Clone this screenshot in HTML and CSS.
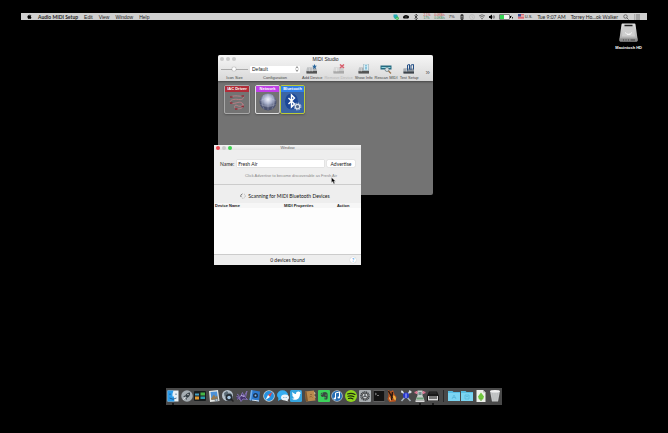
FILE: index.html
```html
<!DOCTYPE html>
<html lang="en">
<head>
<meta charset="utf-8">
<title>Audio MIDI Setup</title>
<link rel="stylesheet" href="styles.css">
</head>
<body>
<div class="screen">
  <header class="menubar">
    <nav class="menus">
      <svg class="apple" viewBox="0 0 12 14"><path d="M8.300 0C8 2 7 3 5.800 3.200 5.800 1.600 7 .3 8.300 0ZM6 4C7 3.900 7.600 3.300 8.700 3.300 9.800 3.300 10.700 3.900 11.300 4.700 8.900 6.200 9.400 9.100 11.700 10 10.900 12 9.600 13.900 8.400 13.900 7.500 13.900 7.100 13.400 6.100 13.400 5.100 13.400 4.600 13.900 3.800 13.900 2.200 13.900.2 10.700.2 8 .2 5 2 3.400 3.700 3.400 4.700 3.400 5.400 4 6 4Z"/></svg>
      <a class="app-name" href="#">Audio MIDI Setup</a>
      <a href="#">Edit</a>
      <a href="#">View</a>
      <a href="#">Window</a>
      <a href="#">Help</a>
    </nav>
    <div class="status">
      <div class="extras">
        <svg class="glyph" viewBox="0 0 12 12"><path d="M1 1h7l2 4-3 5H4L1 6Z" fill="#25a9b8"/><circle cx="8.500" cy="8.500" r="3.300" fill="#3dbb57"/><path d="M7 8.500l1 1 2-2" stroke="#fff" fill="none"/></svg>
        <svg class="glyph" viewBox="0 0 12 12"><path d="M0 6c1-3 3-3 3-3 2-2 5-1 6 0 3 0 3 3 3 3 0 3-2 3-3 3H3C1 9 0 8 0 6Z"/><path d="M3.500 6h5" stroke="#999"/></svg>
        <svg class="glyph" viewBox="0 0 12 12"><path d="M3 3l6 6-3 3V0l3 3-6 6" fill="none" stroke="#222" stroke-width="1.300"/></svg>
        <span class="meter"><span class="meter-up">2.1%</span><span class="meter-down">17%</span></span>
        <span class="meter"><span class="meter-up">0.0KB/s</span><span class="meter-down">0.0KB/s</span></span>
        <span class="percent">7%</span>
        <svg class="glyph" viewBox="0 0 12 12"><rect x="3" y="0" width="6" height="12" rx="3" fill="#333"/><path d="M4 5h4M4 8h4" stroke="#bbb"/></svg>
        <svg class="glyph" viewBox="0 0 12 12"><circle cx="6" cy="6" r="5" fill="none" stroke="#aaa"/><path d="M6 3v3l2 2" fill="none" stroke="#aaa"/></svg>
        <svg class="glyph" viewBox="0 0 12 12"><path d="M0 4q6-5 12 0M2 6.500q4-3 8 0" fill="none" stroke="#444" stroke-width="1.300"/><path d="M4 9q2-1.500 4 0L6 11Z" fill="#333"/></svg>
        <svg class="glyph" viewBox="0 0 12 12"><path d="M0 4h2l4-3v10L2 8H0Z"/><path d="M7.500 4q1.500 2 0 4M9.500 2.500q2.500 3.500 0 7" fill="none" stroke="#222" stroke-width="1.200"/></svg>
        <svg class="battery" viewBox="0 0 28 12"><rect x="1" y="1" width="20" height="10" rx="1" fill="#f4f4f4" stroke="#444" stroke-width="1.300"/><rect x="2" y="2" width="8" height="8" fill="#36d453"/><path d="M22 4h2v4h-2ZM26 2l-1 4h3l-2 5"/></svg>
      </div>
      <span class="locale"><svg class="flag" viewBox="0 0 12 10"><path fill="#e9dada" d="M0 0h12v10H0z"/><path d="M0 1h12M0 4h12M0 7h12M0 9.500h12" stroke="#d33b46" stroke-width="1.400"/><path fill="#3c4f94" d="M0 0h6v5H0z"/></svg>U.S.</span>
      <time class="clock">Tue 9:07 AM</time>
      <span class="user">Torrey Ho…ok Walker</span>
      <svg class="glyph" viewBox="0 0 12 12"><circle cx="5" cy="5" r="3.500" fill="none" stroke="#444" stroke-width="1.300"/><path d="M7.500 7.500L11 11" stroke="#444" stroke-width="1.500"/></svg>
      <svg class="glyph" viewBox="0 0 12 12"><path d="M0 2h1.500M0 6h1.500M0 10h1.500M3.500 2H12M3.500 6H12M3.500 10H12" stroke="#444" stroke-width="1.300"/></svg>
    </div>
  </header>

  <figure class="disk">
    <svg viewBox="0 0 38 38"><defs><linearGradient id="metal" x2="0" y2="1"><stop stop-color="#e4e4e4"/><stop offset="1" stop-color="#a2a2a2"/></linearGradient></defs><path d="M5 3Q5 1 7 1H31Q33 1 33 3L37 31V35Q37 37 35 37H3Q1 37 1 35V31Z" fill="url(#metal)"/><path d="M1 31H37V35Q37 37 35 37H3Q1 37 1 35Z" fill="#8b8b8b"/><path d="M9 4H29L32 27H6Z" fill="#cecece"/><path d="M11 5h16" stroke="#222" stroke-width="3"/><path d="M12 19q7 7 14 0M16 23h7" stroke="#f5f5f5" stroke-width="2" fill="none"/><path d="M8 34h2M13 34h2M18 34h2M23 34h9" stroke="#444" stroke-width="2"/></svg>
    <figcaption>Macintosh HD</figcaption>
  </figure>

  <section class="window studio">
    <header class="studio-head">
      <div class="titlebar">
        <span class="lights"><i></i><i></i><i></i></span>
        <h1>MIDI Studio</h1>
      </div>
      <div class="toolbar">
        <div class="tool tool-size"><span class="tool-body"><input id="size" class="slider" type="range" value="48"></span><label for="size">Icon Size</label></div>
        <div class="tool tool-config"><span class="tool-body"><select id="config" class="picker"><option>Default</option></select><svg class="chevrons" viewBox="0 0 6 10"><path d="M1 4l2-3 2 3M1 6l2 3 2-3" fill="none" stroke="#444"/></svg></span><label for="config">Configuration</label></div>
        <button class="tool" type="button"><span class="tool-body"><svg viewBox="0 0 24 20"><path d="M2 7h18l2 7v5H1v-5Z" fill="#aeb2b5"/><path d="M1 14h21v5H1Z" fill="#555"/><path d="M4 8v7M7 8v7M10 8v7M13 8v7" stroke="#eee"/><path d="M17 0l1.500 3.500H22L19 6l1 4-3-2-3 2 1-4-3-2.500h3.500Z" fill="#24639b"/></svg></span>Add Device</button>
        <button class="tool" type="button" disabled><span class="tool-body"><svg viewBox="0 0 24 20"><path d="M2 7h18l2 7v5H1v-5Z" fill="#ccc"/><path d="M1 14h21v5H1Z" fill="#aaa"/><path d="M4 8v7M7 8v7M10 8v7" stroke="#fff"/><path d="M14 1l8 7M22 1l-8 7" stroke="#d8606e" stroke-width="3"/></svg></span>Remove Device</button>
        <button class="tool" type="button"><span class="tool-body"><svg viewBox="0 0 24 20"><path d="M2 7h18l2 7v5H1v-5Z" fill="#aeb2b5"/><path d="M1 14h21v5H1Z" fill="#555"/><path d="M4 8v7M7 8v7" stroke="#eee"/><path d="M11 0h10v13h-10Z" fill="#d9eef5" stroke="#8fa7b0"/><path d="M16 2v2M16 5v6" stroke="#3b9bc4" stroke-width="2"/></svg></span>Show Info</button>
        <button class="tool" type="button"><span class="tool-body"><svg viewBox="0 0 24 20"><path d="M1 3h22v8H1Z" fill="#246a80"/><path d="M3 7h18" stroke="#8fd4de" stroke-width="2"/><circle cx="14" cy="11" r="4" fill="#d7e1e5" stroke="#6a7c84" stroke-width="1.500"/><path d="M17 14l5 5" stroke="#9a7550" stroke-width="2.500"/></svg></span>Rescan MIDI</button>
        <button class="tool" type="button"><span class="tool-body"><svg viewBox="0 0 24 20"><path d="M1 9h21v10H1Z" fill="#8e969e"/><path d="M1 15h21v4H1Z" fill="#3e444b"/><path d="M9 13V2l4-1v10M16 12V2l5-1v10" fill="none" stroke="#234f86" stroke-width="2"/><path d="M4 10v5M7 10v5" stroke="#eee"/></svg></span>Test Setup</button>
        <button class="more" type="button" aria-label="More">»</button>
      </div>
    </header>
    <div class="devices">
      <article class="device iac">
        <h2>IAC Driver</h2>
        <svg viewBox="0 0 40 40"><path d="M7 10c10-5 20 0 24-2s4 9-8 7-20 3-15 7 16-5 22 0-4 9-10 5-7 8 0 7 14-1 12-10" fill="none" stroke="#c08088" stroke-width="1.800"/><path d="M6 10h5M29 8h5M6 22h5M29 29h5M16 34h5" stroke="#8c2f3a" stroke-width="3"/></svg>
      </article>
      <article class="device network">
        <h2>Network</h2>
        <svg viewBox="0 0 40 40"><defs><radialGradient id="orb" cx=".5" cy=".35"><stop stop-color="#f3f6ff"/><stop offset=".55" stop-color="#a2aac5"/><stop offset="1" stop-color="#4b526f"/></radialGradient></defs><circle cx="20" cy="20" r="17" fill="url(#orb)"/><path d="M5 17q15-8 30 0M5 25q15 7 30 0M20 4v32M12 6q-8 14 0 28M28 6q8 14 0 28" fill="none" stroke="#e1e5f2" opacity=".5"/></svg>
      </article>
      <article class="device bluetooth">
        <h2>Bluetooth</h2>
        <svg viewBox="0 0 40 40"><ellipse cx="17" cy="19" rx="13" ry="16" fill="#1b4797"/><path d="M11 12l12 12-6 6V6l6 6-12 12" fill="none" stroke="#fff" stroke-width="2.800"/><circle cx="29" cy="29" r="4.500" fill="#536b92" stroke="#dce2ea" stroke-width="2.500"/><circle cx="29" cy="29" r="6.800" fill="none" stroke="#dce2ea" stroke-width="2" stroke-dasharray="2.700 2.640"/></svg>
      </article>
    </div>
  </section>

  <section class="window pairing">
    <div class="titlebar">
      <span class="lights lights-active"><i></i><i></i><i></i></span>
      <h1>Window</h1>
    </div>
    <form class="advertise">
      <label for="name">Name:</label>
      <input id="name" type="text" value="Fresh Air">
      <button type="button">Advertise</button>
    </form>
    <p class="hint">Click Advertise to become discoverable as Fresh Air</p>
    <p class="scanning"><svg viewBox="0 0 12 12"><circle cx="6" cy="6" r="4.500" fill="none" stroke="#aaa" stroke-width="2" stroke-dasharray="1.500 2"/><path d="M2 8a4.500 4.500 0 0 1 2-6" fill="none" stroke="#666" stroke-width="1.500"/></svg>Scanning for MIDI Bluetooth Devices</p>
    <div class="results">
      <table>
        <thead><tr><th class="col-name">Device Name</th><th class="col-props">MIDI Properties</th><th>Action</th></tr></thead>
        <tbody></tbody>
      </table>
    </div>
    <footer class="found"><span>0 devices found</span><button type="button" class="help">?</button></footer>
  </section>

  <svg class="cursor" viewBox="0 0 10 14"><path d="M1 1v10l2.500-2 2 4.500 2-1L5.500 8.500H9Z" fill="#000" stroke="#ddd" stroke-width=".7"/></svg>

  <nav class="dock">
    <svg viewBox="0 0 24 24"><path d="M1 1h22v22H1Z" fill="#e8f0f5"/><path d="M1 1h12q-3 7-2 12h3q0 6 1 10H1Z" fill="#2a9bea"/><path d="M6 7v3M18 7v3M5 16q7 5 14 0" stroke="#174a78" stroke-width="1.500" fill="none"/><circle cx="12" cy="28" r="2" fill="#111"/></svg>
    <svg viewBox="0 0 24 24"><circle cx="12" cy="12" r="11.500" fill="#a5adb2"/><path d="M18 5q-7 0-10 7l4 4q7-3 6-11ZM8 11l-4 2 4 1M12 16l-1 4-2-3" fill="#353e44"/><circle cx="14" cy="9" r="1.500" fill="#ccc"/><path d="M8 15l-3 4" stroke="#eee" stroke-width="2"/></svg>
    <svg viewBox="0 0 24 24"><rect y="2" width="24" height="20" rx="2" fill="#181c1d"/><path d="M2 7h8v4H2Z" fill="#47a3c4"/><path d="M13 5h9v6h-9Z" fill="#45b548"/><path d="M2 13h8v6H2Z" fill="#e29a31"/><path d="M13 13h9v5h-9Z" fill="#2c9caf"/></svg>
    <svg viewBox="0 0 24 24"><path d="M2 2L20 0l3 22-19 2Z" fill="#e5e8e6"/><path d="M5 4l13-1 2 15-13 2Z" fill="#4c91d8"/><path d="M6 17l6-8 3 5 3-3 2 7-13 2Z" fill="#967a51"/><circle cx="17" cy="20" r="3" fill="#a9bccc" stroke="#555"/></svg>
    <svg viewBox="0 0 24 24"><circle cx="11" cy="11" r="11" fill="#b7c3cd"/><path d="M4 6l6-4 4 5-3 5-6 1ZM15 5l5 4-3 6-4-3" fill="#5a6a75"/><circle cx="14" cy="15" r="7" fill="#242c34"/><circle cx="14" cy="15" r="3.500" fill="#a9c9e4"/><path d="M18 18l5 5" stroke="#222" stroke-width="3"/></svg>
    <svg viewBox="0 0 24 24"><path d="M2 8l4 3 1 9M1 13l7 2 5-10 3 8 6-11-3 13 4 4-9-1-4 5-3-8-5 4" fill="#44316c" stroke="#8674b6" stroke-width="1.800"/><path d="M10 11l7 2" stroke="#c6bae6" stroke-width="2"/></svg>
    <svg viewBox="0 0 24 24"><path d="M4 0l18 3-2 20L1 20Z" fill="#2c79cf"/><path d="M4 0l3 1-3 20-3-1Z" fill="#74aee8"/><circle cx="13" cy="11" r="5" fill="#1a3556"/><circle cx="13" cy="11" r="2" fill="#8ab9e7"/><path d="M6 20l14 2" stroke="#dbe5ec" stroke-width="2"/></svg>
    <svg viewBox="0 0 24 24"><circle cx="12" cy="12" r="11.500" fill="#cad7df"/><circle cx="12" cy="12" r="10" fill="#2590df"/><path d="M19 4l-5 10-4-4Z" fill="#e94643"/><path d="M5 20l5-10 4 4Z" fill="#fff"/></svg>
    <svg viewBox="0 0 24 24"><ellipse cx="11" cy="10" rx="11" ry="9.500" fill="#35aef2"/><path d="M3 16l-1 6 7-4" fill="#35aef2"/><ellipse cx="16" cy="15" rx="8" ry="6" fill="#eaf3f8"/><path d="M20 19l3 4-7-2" fill="#eaf3f8"/><path d="M12 15h1M15.500 15h1M19 15h1" stroke="#4f8db5" stroke-width="2"/></svg>
    <svg viewBox="0 0 24 24"><rect width="24" height="24" rx="3" fill="#35a4df"/><path d="M3 17c4 1 6-1 6-1-3-1-4-3-4-3h2C4 11 4 9 4 9l2 .5C3 7 5 4 5 4c2 3 5 4 7 4 0-5 5-6 7-4l3-1-2 3 2 0-2 2C20 20 9 22 3 17Z" fill="#fff"/></svg>
    <svg viewBox="0 0 24 24"><path d="M2 3l18-2 3 20-19 2Z" fill="#b98a4d"/><path d="M2 3l3 0 3 19-4 1Z" fill="#80582d"/><path d="M20 4l2 1 1 3-2 1M20 13l3 0v3" fill="#e3cc9e"/><path d="M11 14q4-3 6 1M12 9h4" stroke="#92683a" stroke-width="2" fill="none"/></svg>
    <svg viewBox="0 0 24 24"><rect width="24" height="24" rx="2" fill="#3bd15a"/><path d="M5 9h4V5q8-3 10 2 1 10-1 12h-5v-4h2v2h1v-3q-3 1-4-1-6 3-7-4ZM5 8l3-3v3Z" fill="#394941"/><circle cx="16" cy="10" r="1" fill="#8df19e"/></svg>
    <svg viewBox="0 0 24 24"><circle cx="12" cy="12" r="11.500" fill="#b0becb"/><circle cx="12" cy="12" r="10" fill="#276eb4"/><path d="M9 17V6l8-2v11" fill="none" stroke="#fff" stroke-width="2"/><ellipse cx="7.500" cy="17" rx="2.500" ry="2" fill="#fff"/><ellipse cx="15.500" cy="15" rx="2.500" ry="2" fill="#fff"/></svg>
    <svg viewBox="0 0 24 24"><circle cx="12" cy="12" r="12" fill="#8fd51d"/><path d="M5 8q8-3 15 1M6 12.500q6-2 12 1M7 17q5-2 9 1" fill="none" stroke="#1e2c0b" stroke-width="2.300" stroke-linecap="round"/></svg>
    <svg viewBox="0 0 24 24"><rect width="24" height="24" rx="2" fill="#a9aeb1"/><circle cx="12" cy="12" r="8" fill="none" stroke="#3d4246" stroke-width="3" stroke-dasharray="2.500 1"/><circle cx="12" cy="12" r="6" fill="#ccd0d2" stroke="#555" stroke-width="2"/><path d="M12 12V6M12 12l5 3M12 12l-5 3" stroke="#3d4246" stroke-width="2"/></svg>
    <svg viewBox="0 0 24 24"><rect y="1" width="24" height="22" rx="2" fill="#777"/><rect x="1" y="2" width="22" height="20" rx="1" fill="#131313"/><path d="M4 6l3 2-3 2M8 11h4" stroke="#ddd" fill="none"/></svg>
    <svg viewBox="0 0 24 24"><path d="M4 0l6 3 4-3 3 9 4 5-2 9-12 1-4-6 2-7Z" fill="#b9541f"/><path d="M5 2l8 14M13 4l-2 16" stroke="#271810" stroke-width="3"/><path d="M15 10q-2 4 0 7t4 4q3-6-4-11Z" fill="#efb443"/><path d="M7 15l2 6" stroke="#efd29a" stroke-width="2"/></svg>
    <svg viewBox="0 0 24 24"><path d="M3 2l18 20M21 2L3 22" stroke="#a9b4bf" stroke-width="3"/><path d="M2 1l4 1 1 4-4 0ZM19 0l-2 5 3 2 4-3" fill="#d6dce1"/><circle cx="12" cy="11" r="6" fill="#2839cf"/><path d="M12 7v9" stroke="#aeb7ff" stroke-width="2"/></svg>
    <svg viewBox="0 0 24 24"><path d="M1 5h22M5 2v6M19 2v6" stroke="#da7593" stroke-width="3"/><path d="M7 1h10v10l4 10H3l4-10Z" fill="#c5d0c9"/><path d="M5 15h14v4H5Z" fill="#6e9f79"/><path d="M9 4h6v6H9Z" fill="#718a8d"/><path d="M3 21h18v3H3Z" fill="#d9d9d9"/><circle cx="12" cy="28" r="2" fill="#111"/></svg>
    <svg viewBox="0 0 24 24"><path d="M4 3h16l4 9v10H0V12Z" fill="#191919"/><path d="M2 12h20v9H2Z" fill="#ddd"/><path d="M6 12v6M10 12v6M14 12v6M18 12v6" stroke="#111" stroke-width="2"/><path d="M5 6h14" stroke="#555"/><circle cx="12" cy="28" r="2" fill="#111"/></svg>
    <span class="divider"></span>
    <svg viewBox="0 0 24 24"><path d="M0 2h9l2 2h13v18H0Z" fill="#58bfe4"/><path d="M0 6h24v16H0Z" fill="#7bd5f2"/><path d="M8 18l4-8 4 8M9 15h6" fill="none" stroke="#56b6d8" stroke-width="1.500"/></svg>
    <svg viewBox="0 0 24 24"><path d="M0 2h9l2 2h13v18H0Z" fill="#58bfe4"/><path d="M0 6h24v16H0Z" fill="#7bd5f2"/><path d="M8 10h8v8H8ZM10 13h4" fill="none" stroke="#56b6d8" stroke-width="1.500"/></svg>
    <svg viewBox="0 0 24 24"><path d="M3 0h13l5 5v19H3Z" fill="#edf0ea"/><path d="M16 0v5h5" fill="#b9bdb7"/><path d="M12 5l6 8-2 6H8l-2-6Z" fill="#70c83d"/><path d="M12 17v5" stroke="#55952e" stroke-width="2"/></svg>
    <svg viewBox="0 0 24 24"><path d="M2 2h20l-4 21H6Z" fill="#c5c7c8"/><ellipse cx="12" cy="2.500" rx="10" ry="2.500" fill="#efefef"/><path d="M7 6l2 15M12 6v15M17 6l-2 15" stroke="#aeb0b1"/></svg>
  </nav>
</div>
</body>
</html>
```

FILE: styles.css
```css
* { box-sizing: border-box; }

body {
  margin: 0;
  background: #000;
  color: #222;
  font: 5px/6px "Liberation Sans", Arial, sans-serif;
}

h1, h2, p, figure { margin: 0; font-size: inherit; }
svg { display: block; flex: none; }
button, input, select { margin: 0; padding: 0; border: 0; color: inherit; font: inherit; background: none; }
a { color: inherit; text-decoration: none; }

.screen {
  position: relative;
  display: flex;
  flex-direction: column;
  align-items: center;
  min-height: 100vh;
  padding: 13px 21px 28px;
}

/* Menu bar */
.menubar {
  display: flex;
  justify-content: space-between;
  align-items: center;
  align-self: stretch;
  height: 7px;
  padding: 0 7px 0 6px;
  background: #d0d0d0;
  white-space: nowrap;
}
.menus { display: flex; align-items: center; gap: 6px; }
.apple { width: 5px; height: 5px; }
.app-name { font-family: Lato, sans-serif; font-weight: bold; }
.status { display: flex; align-items: center; gap: 5px; }
.extras { display: flex; align-items: center; gap: 4px; }
.glyph { width: 6px; height: 6px; }
.battery { width: 14px; height: 6px; }
.meter { display: flex; flex-direction: column; font-size: 3px; line-height: 3px; }
.meter-up { color: #c33b42; }
.meter-down { color: #328252; }
.percent { font-size: 4px; }
.locale { display: flex; align-items: center; gap: 1px; font-size: 4px; }
.flag { width: 6px; height: 5px; }
.clock, .user { font-family: Lato, sans-serif; }

/* Desktop disk */
.disk {
  position: absolute;
  top: 23px;
  right: 26px;
  display: flex;
  flex-direction: column;
  align-items: center;
  gap: 3px;
  color: #fff;
  font-size: 4px;
  font-weight: bold;
}
.disk svg { width: 19px; height: 19px; }

/* Windows */
.window { position: absolute; display: flex; flex-direction: column; overflow: hidden; }
.titlebar { display: grid; grid-template-columns: 1fr auto 1fr; align-items: center; padding: 0 2px; }
.titlebar h1 { font-weight: normal; }
.lights { display: flex; gap: 2px; }
.lights i { width: 4px; height: 4px; border-radius: 50%; background: #cacaca; }
.lights-active i:first-child { background: #ed4650; }
.lights-active i:last-child { background: #3fd351; }

.studio { top: 55px; left: 218px; width: 215px; height: 140px; border-radius: 2px; background: #737373; }
.studio-head { background: linear-gradient(#f6f6f6, #d8d8d8); box-shadow: 0 1px 2px #444; }
.studio .titlebar { height: 8px; }
.toolbar { display: flex; gap: 2px; height: 18px; padding: 1px 3px 0; color: #444; font-size: 4px; line-height: 5px; white-space: nowrap; }
.tool { display: flex; flex-direction: column; align-items: center; gap: 1px; }
.tool-body { position: relative; display: flex; align-items: center; justify-content: center; width: 100%; height: 10px; }
.tool-body > svg { width: 12px; height: 10px; }
.tool:disabled { color: #b5b5b5; }
.tool-size { width: 27px; }
.tool-config { width: 50px; }
.slider { width: 100%; height: 4px; appearance: none; background: linear-gradient(#aaa, #aaa) center / 100% 1px no-repeat; }
.slider::-webkit-slider-thumb { appearance: none; width: 4px; height: 4px; border-radius: 50%; background: #fff; box-shadow: 0 0 1px #555; }
.picker { width: 100%; height: 7px; padding: 0 2px; appearance: none; border-radius: 1px; background: #fff; color: #222; font-size: 5px; line-height: 7px; }
.tool-body > .chevrons { position: absolute; right: 1px; width: 4px; height: 6px; }
.more { margin-left: auto; color: #666; font-size: 8px; }

.devices { display: flex; align-items: flex-start; padding: 4px 6px; }
.device { display: flex; flex-direction: column; align-items: center; width: 25px; height: 29px; border: 1px solid #a8a8a8; border-radius: 2px; box-shadow: 0 1px 2px #555; color: #fff; font-size: 4px; }
.device h2 { align-self: stretch; text-align: center; white-space: nowrap; }
.device svg { width: 20px; height: 20px; }
.iac { width: 26px; margin-right: 5px; }
.iac h2 { background: #b02c38; }
.network { border-color: #ddd; }
.network h2 { background: #c141e8; }
.bluetooth { border-color: #bccb38; background: #3b65a4; }
.bluetooth h2 { background: #3180e8; }

.pairing { top: 145px; left: 214px; width: 147px; height: 120px; background: #eee; }
.pairing .titlebar { height: 5px; background: linear-gradient(#f4f4f4, #e2e2e2); color: #666; font-size: 4px; line-height: 5px; }
.advertise { display: flex; align-items: center; gap: 3px; padding: 10px 6px 0; font-family: Lato, sans-serif; }
.advertise input { flex: 1; min-width: 0; height: 7px; padding: 0 1px; background: #fff; box-shadow: 0 0 1px #aaa; }
.advertise button { width: 28px; height: 7px; border-radius: 1px; background: #fff; box-shadow: 0 0 1px #999; }
.hint { padding: 6px 0 6px 7px; border-bottom: 1px solid #ccc; color: #888; font-size: 4px; line-height: 5px; text-align: center; }
.scanning { display: flex; align-items: center; justify-content: center; gap: 2px; padding: 8px 5px 4px 0; color: #111; font-family: Lato, sans-serif; }
.scanning svg { width: 6px; height: 6px; }
.results { flex: 1; background: #fdfdfd; }
.results table { width: 100%; border-collapse: collapse; table-layout: fixed; font-size: 4px; line-height: 5px; }
.results thead { background: #f6f6f6; }
.results th { padding: 0 1px; text-align: left; white-space: nowrap; }
.col-name { width: 47%; }
.col-props { width: 36%; }
.found { display: grid; grid-template-columns: 1fr auto 1fr; align-items: center; height: 11px; padding: 0 5px; border-top: 1px solid #ccc; font-family: Lato, sans-serif; }
.found span { grid-column: 2; }
.help { justify-self: end; width: 6px; height: 6px; border-radius: 50%; background: #fff; color: #2387e8; line-height: 6px; box-shadow: 0 0 1px #aaa; }

.cursor { position: absolute; top: 177px; left: 331px; width: 5px; height: 7px; }

/* Dock */
.dock {
  display: flex;
  align-items: center;
  justify-content: space-between;
  width: 336px;
  height: 17px;
  margin-top: auto;
  padding: 0 1px 1px;
  background: #494949;
}
.dock svg { width: 12px; height: 12px; overflow: visible; }
.divider { width: 5px; height: 12px; background: linear-gradient(#292929, #292929) center / 1px 100% no-repeat; }
```
